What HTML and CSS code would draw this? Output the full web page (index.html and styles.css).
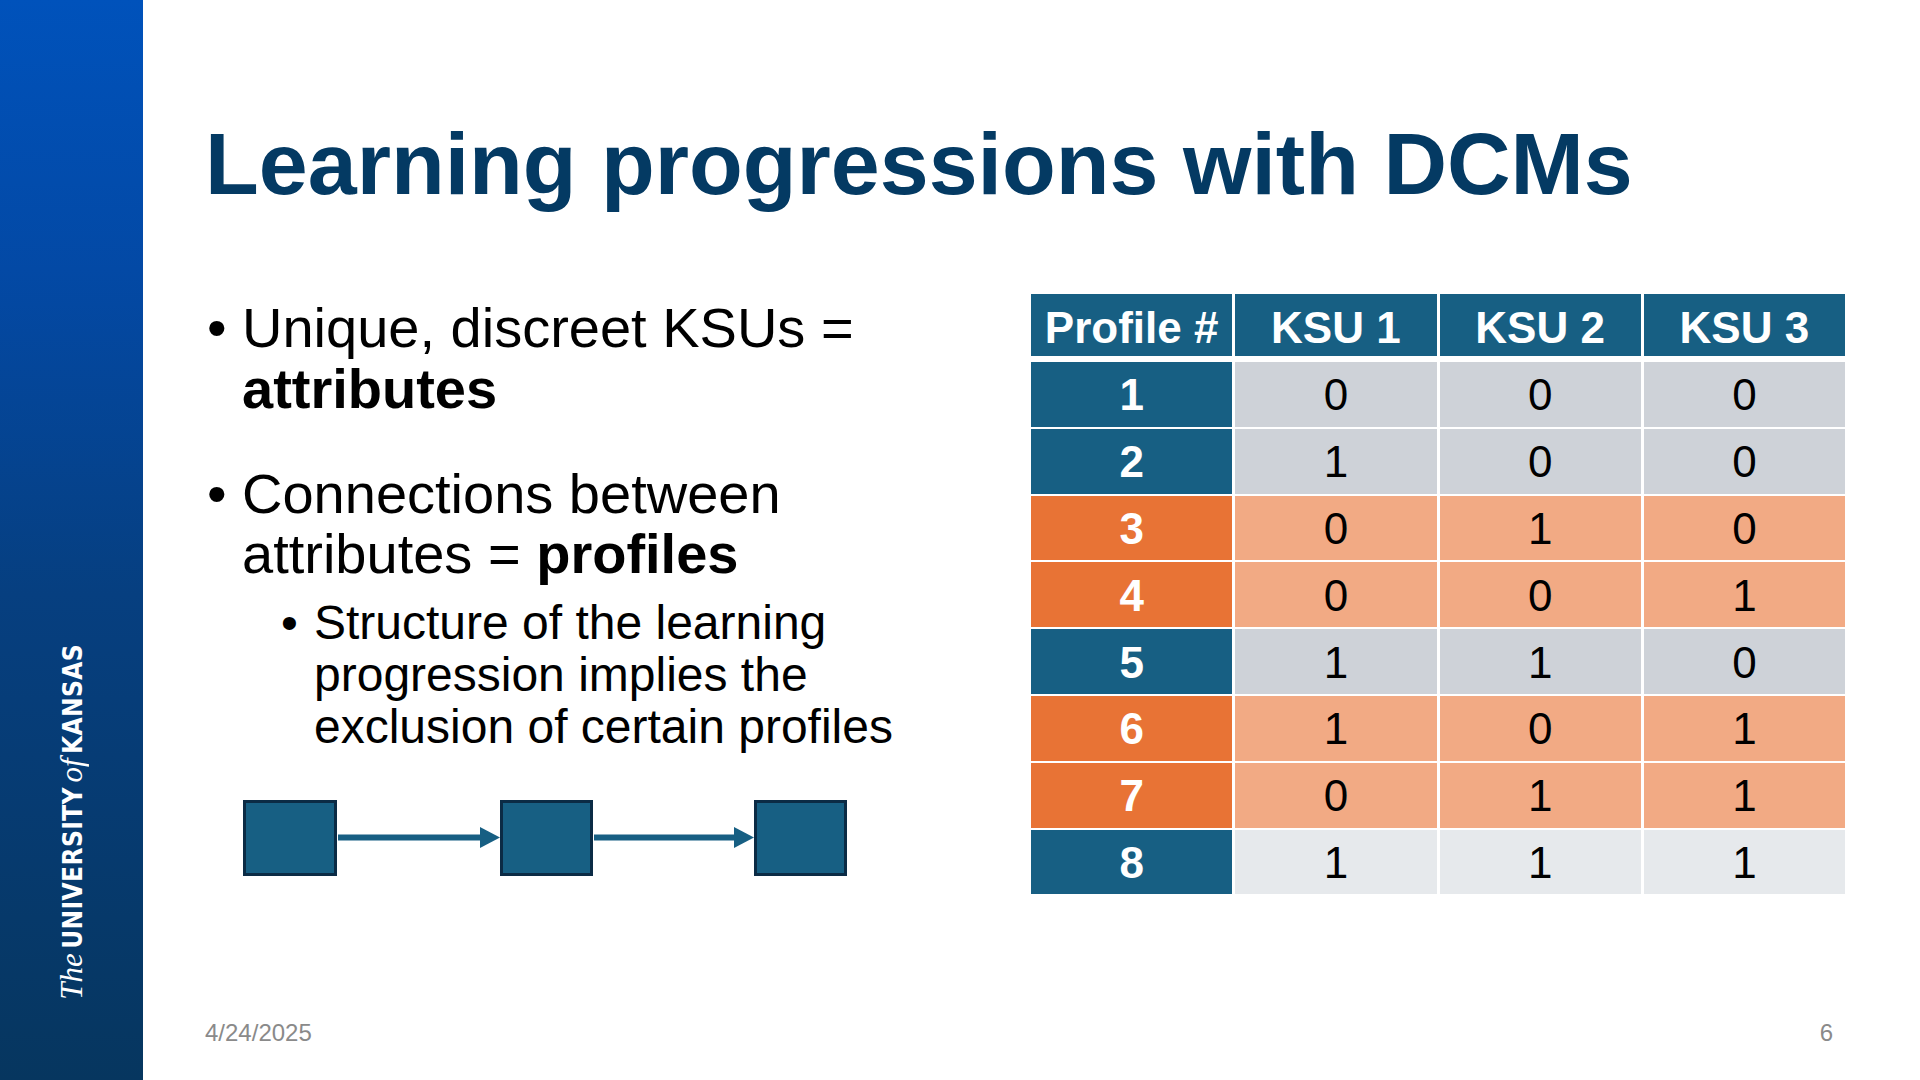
FILE: index.html
```html
<!DOCTYPE html>
<html lang="en">
<head>
<meta charset="utf-8">
<title>Learning progressions with DCMs</title>
<link rel="stylesheet" href="styles.css">
</head>
<body>
<div class="slide">
  <aside class="sidebar">
    <div class="wordmark"><span class="wm-serif">The</span> <span class="wm-sans">UNIVERSITY</span> <span class="wm-serif">of</span> <span class="wm-sans">KANSAS</span></div>
  </aside>
  <main class="main">
    <h1 class="title">Learning progressions with DCMs</h1>
    <div class="content">
      <div class="left">
        <ul class="bullets">
          <li class="item"><span class="dot">•</span><span class="txt">Unique, discreet KSUs = <b>attributes</b></span></li>
          <li class="item item-gap"><span class="dot">•</span><span class="txt">Connections between attributes = <b>profiles</b></span></li>
          <li class="sub"><span class="dot dot-sub">•</span><span class="txt">Structure of the learning progression implies the exclusion of certain profiles</span></li>
        </ul>
        <svg class="diagram" width="607" height="78" viewBox="0 0 607 78">
          <rect x="2.5" y="2.5" width="91" height="73" class="box"/>
          <rect x="259.5" y="2.5" width="90" height="73" class="box"/>
          <rect x="513.5" y="2.5" width="90" height="73" class="box"/>
          <line x1="96" y1="38.5" x2="240" y2="38.5" class="arrow-line"/>
          <polygon points="238,28 258,38.5 238,49" class="arrow-head"/>
          <line x1="352" y1="38.5" x2="494" y2="38.5" class="arrow-line"/>
          <polygon points="492,28 512,38.5 492,49" class="arrow-head"/>
        </svg>
      </div>
      <div class="table">
        <div class="thead">
          <div class="th">Profile #</div>
          <div class="th">KSU 1</div>
          <div class="th">KSU 2</div>
          <div class="th">KSU 3</div>
        </div>
        <div class="tbody">
          <div class="lab blue">1</div><div class="cell grey">0</div><div class="cell grey">0</div><div class="cell grey">0</div>
          <div class="lab blue">2</div><div class="cell grey">1</div><div class="cell grey">0</div><div class="cell grey">0</div>
          <div class="lab orange">3</div><div class="cell peach">0</div><div class="cell peach">1</div><div class="cell peach">0</div>
          <div class="lab orange">4</div><div class="cell peach">0</div><div class="cell peach">0</div><div class="cell peach">1</div>
          <div class="lab blue">5</div><div class="cell grey">1</div><div class="cell grey">1</div><div class="cell grey">0</div>
          <div class="lab orange">6</div><div class="cell peach">1</div><div class="cell peach">0</div><div class="cell peach">1</div>
          <div class="lab orange">7</div><div class="cell peach">0</div><div class="cell peach">1</div><div class="cell peach">1</div>
          <div class="lab blue">8</div><div class="cell light">1</div><div class="cell light">1</div><div class="cell light">1</div>
        </div>
      </div>
    </div>
    <footer class="footer">
      <span class="date">4/24/2025</span>
      <span class="page">6</span>
    </footer>
  </main>
</div>
</body>
</html>
```

FILE: styles.css
```css
html, body {
  margin: 0;
  padding: 0;
  background: #ffffff;
}

.slide {
  display: flex;
  width: 1920px;
  height: 1080px;
  overflow: hidden;
  font-family: "Liberation Sans", Arial, sans-serif;
  color: #000;
}

/* sidebar */
.sidebar {
  width: 143px;
  flex: none;
  background: linear-gradient(180deg, #0052bb 0%, #0349a5 25%, #063f80 55%, #06365f 100%);
  display: flex;
  flex-direction: column;
  justify-content: flex-end;
  align-items: center;
  padding-bottom: 80px;
  box-sizing: border-box;
}

.wordmark {
  writing-mode: vertical-rl;
  text-orientation: sideways;
  transform: rotate(180deg);
  color: #ffffff;
  white-space: nowrap;
  line-height: 1;
}

.wm-serif {
  font-family: "Liberation Serif", "DejaVu Serif", serif;
  font-style: italic;
  font-size: 31px;
}

.wm-sans {
  font-family: "DejaVu Sans Condensed", "Liberation Sans Narrow", sans-serif;
  font-weight: 700;
  font-size: 26px;
  letter-spacing: 0.4px;
}

/* main */
.main {
  flex: 1;
  display: flex;
  flex-direction: column;
  padding: 120px 75px 0 64px;
  box-sizing: border-box;
  min-width: 0;
}

.title {
  margin: 0 0 0 -2px;
  font-size: 88px;
  line-height: 88px;
  font-weight: 700;
  color: #043a63;
  white-space: nowrap;
}

.content {
  display: flex;
  justify-content: space-between;
  align-items: flex-start;
}

.left {
  padding-top: 90px;
  display: flex;
  flex-direction: column;
}

.bullets {
  list-style: none;
  margin: 0;
  padding: 0;
}

.item {
  display: flex;
  font-size: 56px;
  line-height: 60.5px;
}

.item-gap {
  margin-top: 44.5px;
}

.sub {
  display: flex;
  font-size: 48px;
  line-height: 51.8px;
  margin-top: 12.5px;
  margin-left: 74px;
}

.dot {
  flex: none;
  width: 35px;
}

.dot-sub {
  width: 33px;
}

.txt {
  width: 640px;
}

.sub .txt {
  width: 595px;
}

.diagram {
  display: block;
  margin-top: 47px;
  margin-left: 35px;
}

.box {
  fill: #175f83;
  stroke: #0b2b45;
  stroke-width: 3;
}

.arrow-line {
  stroke: #175f83;
  stroke-width: 6;
}

.arrow-head {
  fill: #175f83;
}

/* table */
.table {
  width: 814px;
  margin-top: 85.5px;
  font-size: 44px;
}

.thead,
.tbody {
  display: grid;
  grid-template-columns: repeat(4, 1fr);
  column-gap: 3px;
}

.thead {
  grid-template-rows: 62px;
  margin-bottom: 6.5px;
}

.tbody {
  grid-template-rows: repeat(8, 64.8px);
  row-gap: 2px;
}

.th,
.lab,
.cell {
  display: flex;
  align-items: center;
  justify-content: center;
  line-height: 1;
}

.th {
  padding-top: 6px;
}

.lab,
.cell {
  padding-top: 2px;
}

.th,
.lab {
  font-weight: 700;
  color: #ffffff;
}

.th,
.blue {
  background: #175f83;
}

.orange {
  background: #e87335;
}

.grey {
  background: #ced2d8;
}

.peach {
  background: #f2aa84;
}

.light {
  background: #e6e9ec;
}

/* footer */
.footer {
  margin: auto 0 0 -2px;
  display: flex;
  justify-content: space-between;
  padding: 0 12px 33px 0;
  font-size: 24px;
  line-height: 27.6px;
  color: #8a8a8a;
}
```
